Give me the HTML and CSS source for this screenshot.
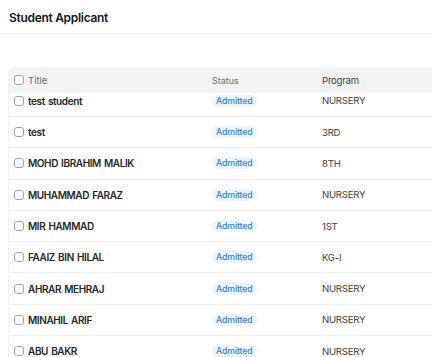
FILE: index.html
```html
<!DOCTYPE html>
<html>
<head>
<meta charset="utf-8">
<link rel="stylesheet" href="styles.css">
</head>
<body>
<header class="page-header"><h1 class="page-title">Student Applicant</h1></header>
<main class="content">
  <div class="table">
    <div class="row head">
      <div class="cell title"><span class="check"></span><span>Title</span></div>
      <div class="cell status">Status</div>
      <div class="cell program">Program</div>
    </div>
    <div class="body">
      <div class="rows">
        <div class="row"><div class="cell title"><span class="check"></span><span class="name">test student</span></div><div class="cell status"><span class="badge">Admitted</span></div><div class="cell program">NURSERY</div></div>
        <div class="row"><div class="cell title"><span class="check"></span><span class="name">test</span></div><div class="cell status"><span class="badge">Admitted</span></div><div class="cell program">3RD</div></div>
        <div class="row"><div class="cell title"><span class="check"></span><span class="name">MOHD IBRAHIM MALIK</span></div><div class="cell status"><span class="badge">Admitted</span></div><div class="cell program">8TH</div></div>
        <div class="row"><div class="cell title"><span class="check"></span><span class="name">MUHAMMAD FARAZ</span></div><div class="cell status"><span class="badge">Admitted</span></div><div class="cell program">NURSERY</div></div>
        <div class="row"><div class="cell title"><span class="check"></span><span class="name">MIR HAMMAD</span></div><div class="cell status"><span class="badge">Admitted</span></div><div class="cell program">1ST</div></div>
        <div class="row"><div class="cell title"><span class="check"></span><span class="name">FAAIZ BIN HILAL</span></div><div class="cell status"><span class="badge">Admitted</span></div><div class="cell program">KG-I</div></div>
        <div class="row"><div class="cell title"><span class="check"></span><span class="name">AHRAR MEHRAJ</span></div><div class="cell status"><span class="badge">Admitted</span></div><div class="cell program">NURSERY</div></div>
        <div class="row"><div class="cell title"><span class="check"></span><span class="name">MINAHIL ARIF</span></div><div class="cell status"><span class="badge">Admitted</span></div><div class="cell program">NURSERY</div></div>
        <div class="row"><div class="cell title"><span class="check"></span><span class="name">ABU BAKR</span></div><div class="cell status"><span class="badge">Admitted</span></div><div class="cell program">NURSERY</div></div>
      </div>
    </div>
  </div>
</main>
</body>
</html>
```
FILE: styles.css
```css
* { box-sizing: border-box; }
html, body { margin: 0; padding: 0; background: #fff; }
body {
  font-family: Inter, "Noto Sans", sans-serif;
  color: #1f1f1f;
  width: 432px;
  height: 357px;
  overflow: hidden;
}
.page-header {
  height: 34px;
  display: flex;
  align-items: center;
  padding: 1px 9px 0;
  border-bottom: 1px solid #f2f2f2;
}
.page-title {
  margin: 0;
  font-size: 12px;
  font-weight: 600;
  color: #171717;
  letter-spacing: -0.3px;
}
.content {
  padding: 33px 0 0 8px;
}
.table {
  width: 440px;
  border-left: 1px solid #f1f1f1;
  border-top-left-radius: 6px;
  overflow: hidden;
}
.row {
  display: grid;
  grid-template-columns: 203px 110px 1fr;
  align-items: center;
  height: 31.3px;
  border-bottom: 1px solid #efefef;
  font-size: 9px;
}
.row.head {
  height: 26px;
  background: #f3f3f3;
  border-bottom: none;
  color: #6b6b6b;
  position: relative;
  z-index: 1;
}
.row.head .title { font-size: 9.5px; }
.body {
  height: 300px;
  overflow: hidden;
}
.rows {
  margin-top: -7.3px;
}
.cell.title {
  display: flex;
  align-items: center;
  gap: 4px;
  padding-left: 5px;
}
.check {
  width: 10px;
  height: 10px;
  border: 1px solid #a3a3a3;
  border-radius: 3px;
  background: #fff;
  flex: none;
}
.name {
  font-size: 10px;
  font-weight: 600;
  letter-spacing: -0.4px;
  word-spacing: 1px;
  color: #262626;
}
.cell.program {
  font-size: 9.6px;
  letter-spacing: -0.25px;
  color: #404040;
}
.badge {
  display: inline-block;
  font-size: 8.7px;
  line-height: 12px;
  padding: 0 4px;
  border-radius: 7px;
  background: #eaf5fe;
  color: #3a7fc8;
  font-weight: 500;
  letter-spacing: -0.1px;
}
```
